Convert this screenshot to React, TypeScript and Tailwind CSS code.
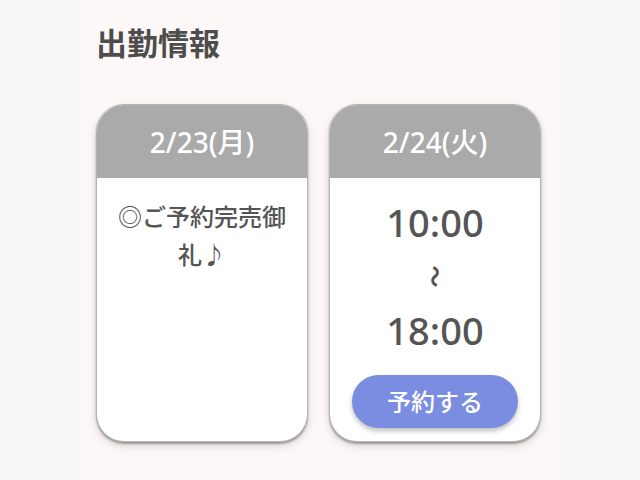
import type { ReactNode } from 'react'

const font = { fontFamily: '"Noto Sans", "Noto Sans CJK JP", sans-serif' }

function DayCard({ date, children }: { date: string; children: ReactNode }) {
  return (
    <div className="flex h-[338px] w-[212px] shrink-0 flex-col overflow-hidden rounded-[28px] border border-[#b4b4b4] bg-white shadow-[0_2px_2px_rgba(0,0,0,0.3),0_4px_8px_rgba(0,0,0,0.15)]">
      <div className="flex h-[73px] shrink-0 items-center justify-center bg-[#aaaaaa] text-[28px] font-medium text-white">
        {date}
      </div>
      <div className="flex flex-1 flex-col items-center px-3 pt-5 text-[#555]">{children}</div>
    </div>
  )
}

export default function App() {
  return (
    <div className="flex h-[480px] w-full justify-center bg-[#f8f8f8]" style={font}>
      <div className="h-full w-[480px] overflow-hidden bg-[#fdf8f7] pl-4 pt-5">
        <h2 className="h-[46px] text-[31px] font-bold leading-[46px] text-[#4d4d4d]">出勤情報</h2>

        <div className="mt-[38px] flex gap-[21px]">
          <DayCard date="2/23(月)">
            <p className="text-center text-[24px] font-medium leading-[38px]">◎ご予約完売御礼♪</p>
          </DayCard>

          <DayCard date="2/24(火)">
            <div className="flex h-[48px] items-center text-[38px] font-medium">10:00</div>
            <div className="flex h-[60px] items-center justify-center">
              <span className="inline-block rotate-90 text-[22px] font-bold">〜</span>
            </div>
            <div className="flex h-[48px] items-center text-[38px] font-medium">18:00</div>
            <button className="mt-[21px] h-[53px] w-[166px] rounded-full bg-[#7b8de1] text-[24px] font-medium text-white shadow-[0_3px_5px_rgba(0,0,0,0.25)]">
              予約する
            </button>
          </DayCard>

          <div className="h-[338px] w-[212px] shrink-0 rounded-[28px] border border-[#b4b4b4] bg-white" />
        </div>
      </div>
    </div>
  )
}
